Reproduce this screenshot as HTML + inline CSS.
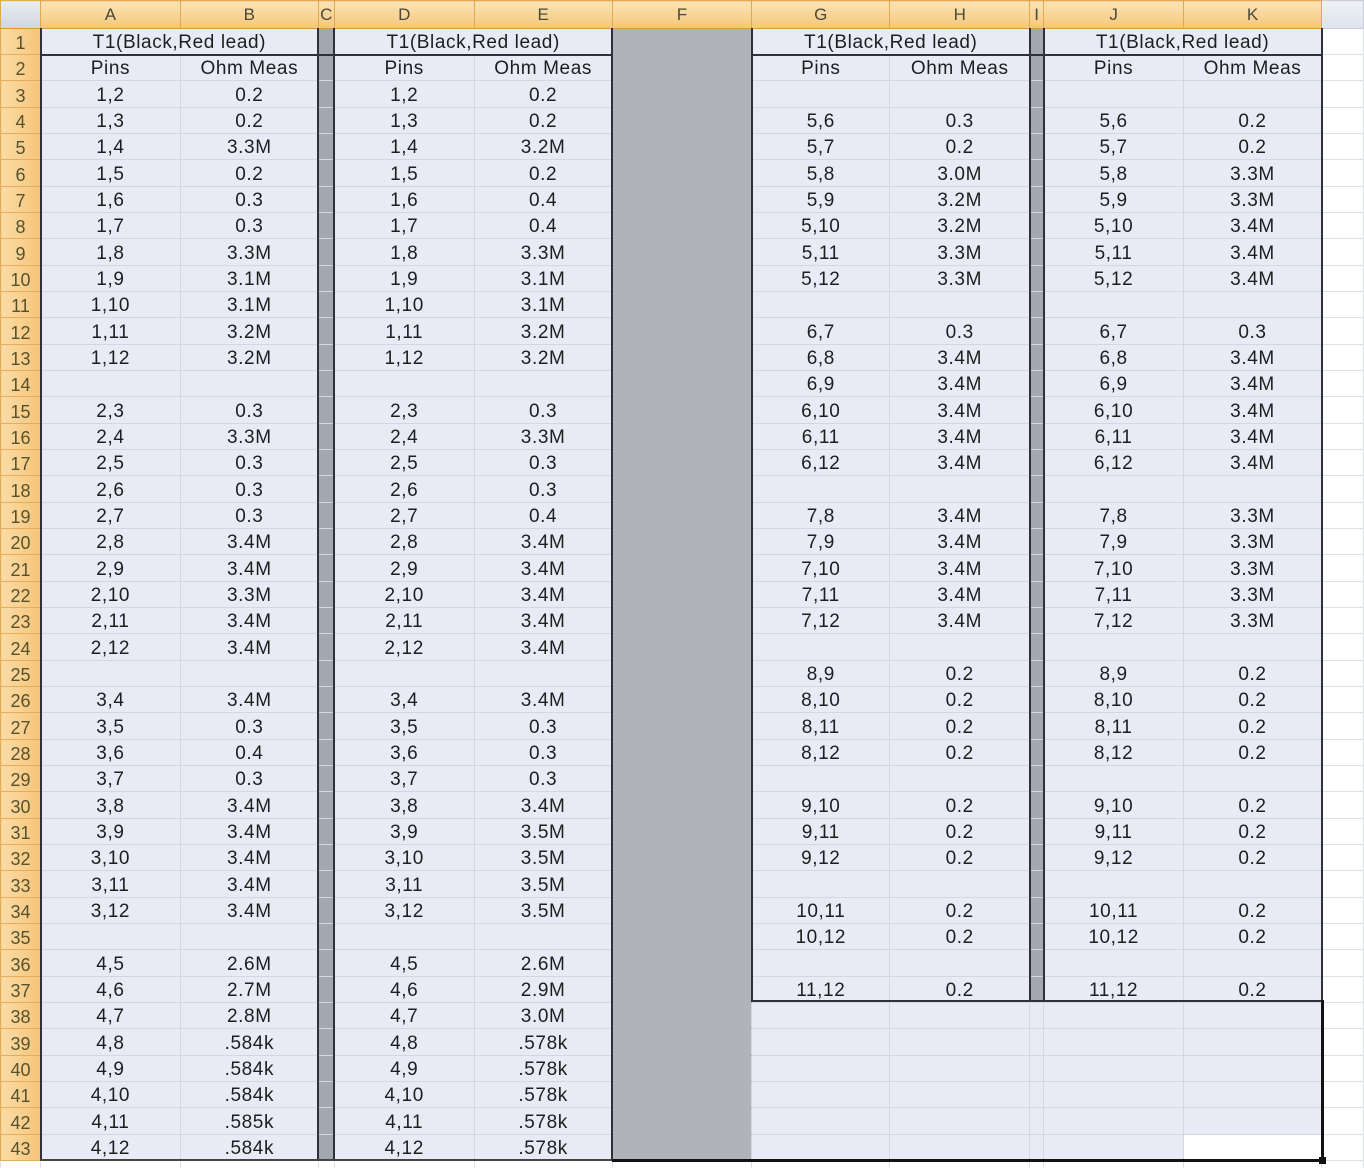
<!DOCTYPE html>
<html><head><meta charset="utf-8">
<style>
html,body{margin:0;padding:0;background:#fff;width:1364px;height:1168px;overflow:hidden;position:relative}
table{border-collapse:collapse;table-layout:fixed;position:absolute;left:0;top:0;font-family:"Liberation Sans",sans-serif}
td{border:1px solid #d3d7e1;padding:3px 0 0 0;text-align:center;font-size:19px;letter-spacing:0.6px;color:#1e1e1e;white-space:nowrap;overflow:hidden;background:#e8ebf5;line-height:20px}
tr.h td{background:linear-gradient(#fbe3b6,#f5c67a);color:#4a4a3a;font-size:17px;height:27px;padding:0;border-color:#e0a850;border-bottom:1px solid #d99a3a;letter-spacing:0}
tr.h td.corner{background:linear-gradient(#e9edf3,#cfd6e0)}
td.r{background:linear-gradient(90deg,#fbdca6,#f6c479);color:#57522e;font-size:18px;letter-spacing:0;border-color:#e2ad5c}
td.c{background:#a3a7af}
td.f{background:#b0b3ba;border-top-color:#b0b3ba;border-bottom-color:#b0b3ba}
td.l{background:#fff;border-color:#dde0e6}
td.w{background:#fff}
.ln{position:absolute;background:#2e3238}
</style></head><body>
<table>
<colgroup><col style="width:40px"><col style="width:140px"><col style="width:138px"><col style="width:16px"><col style="width:140px"><col style="width:138px"><col style="width:140px"><col style="width:138px"><col style="width:140px"><col style="width:14px"><col style="width:140px"><col style="width:138px"><col style="width:42px"></colgroup>
<tr class="h"><td class="corner"></td><td>A</td><td>B</td><td>C</td><td>D</td><td>E</td><td>F</td><td>G</td><td>H</td><td>I</td><td>J</td><td>K</td><td style="background:linear-gradient(#eef1f6,#dde3ec);border-color:#c9ced8"></td></tr>
<tr style="height:26px"><td class="r">1</td><td colspan="2">T1(Black,Red lead)</td><td class="c"></td><td colspan="2">T1(Black,Red lead)</td><td class="f"></td><td colspan="2">T1(Black,Red lead)</td><td class="c"></td><td colspan="2">T1(Black,Red lead)</td><td class="l"></td></tr>
<tr style="height:26px"><td class="r">2</td><td>Pins</td><td>Ohm Meas</td><td class="c"></td><td>Pins</td><td>Ohm Meas</td><td class="f"></td><td>Pins</td><td>Ohm Meas</td><td class="c"></td><td>Pins</td><td>Ohm Meas</td><td class="l"></td></tr>
<tr style="height:27px"><td class="r">3</td><td>1,2</td><td>0.2</td><td class="c"></td><td>1,2</td><td>0.2</td><td class="f"></td><td></td><td></td><td class="c"></td><td></td><td></td><td class="l"></td></tr>
<tr style="height:26px"><td class="r">4</td><td>1,3</td><td>0.2</td><td class="c"></td><td>1,3</td><td>0.2</td><td class="f"></td><td>5,6</td><td>0.3</td><td class="c"></td><td>5,6</td><td>0.2</td><td class="l"></td></tr>
<tr style="height:26px"><td class="r">5</td><td>1,4</td><td>3.3M</td><td class="c"></td><td>1,4</td><td>3.2M</td><td class="f"></td><td>5,7</td><td>0.2</td><td class="c"></td><td>5,7</td><td>0.2</td><td class="l"></td></tr>
<tr style="height:27px"><td class="r">6</td><td>1,5</td><td>0.2</td><td class="c"></td><td>1,5</td><td>0.2</td><td class="f"></td><td>5,8</td><td>3.0M</td><td class="c"></td><td>5,8</td><td>3.3M</td><td class="l"></td></tr>
<tr style="height:26px"><td class="r">7</td><td>1,6</td><td>0.3</td><td class="c"></td><td>1,6</td><td>0.4</td><td class="f"></td><td>5,9</td><td>3.2M</td><td class="c"></td><td>5,9</td><td>3.3M</td><td class="l"></td></tr>
<tr style="height:26px"><td class="r">8</td><td>1,7</td><td>0.3</td><td class="c"></td><td>1,7</td><td>0.4</td><td class="f"></td><td>5,10</td><td>3.2M</td><td class="c"></td><td>5,10</td><td>3.4M</td><td class="l"></td></tr>
<tr style="height:27px"><td class="r">9</td><td>1,8</td><td>3.3M</td><td class="c"></td><td>1,8</td><td>3.3M</td><td class="f"></td><td>5,11</td><td>3.3M</td><td class="c"></td><td>5,11</td><td>3.4M</td><td class="l"></td></tr>
<tr style="height:26px"><td class="r">10</td><td>1,9</td><td>3.1M</td><td class="c"></td><td>1,9</td><td>3.1M</td><td class="f"></td><td>5,12</td><td>3.3M</td><td class="c"></td><td>5,12</td><td>3.4M</td><td class="l"></td></tr>
<tr style="height:26px"><td class="r">11</td><td>1,10</td><td>3.1M</td><td class="c"></td><td>1,10</td><td>3.1M</td><td class="f"></td><td></td><td></td><td class="c"></td><td></td><td></td><td class="l"></td></tr>
<tr style="height:27px"><td class="r">12</td><td>1,11</td><td>3.2M</td><td class="c"></td><td>1,11</td><td>3.2M</td><td class="f"></td><td>6,7</td><td>0.3</td><td class="c"></td><td>6,7</td><td>0.3</td><td class="l"></td></tr>
<tr style="height:26px"><td class="r">13</td><td>1,12</td><td>3.2M</td><td class="c"></td><td>1,12</td><td>3.2M</td><td class="f"></td><td>6,8</td><td>3.4M</td><td class="c"></td><td>6,8</td><td>3.4M</td><td class="l"></td></tr>
<tr style="height:26px"><td class="r">14</td><td></td><td></td><td class="c"></td><td></td><td></td><td class="f"></td><td>6,9</td><td>3.4M</td><td class="c"></td><td>6,9</td><td>3.4M</td><td class="l"></td></tr>
<tr style="height:27px"><td class="r">15</td><td>2,3</td><td>0.3</td><td class="c"></td><td>2,3</td><td>0.3</td><td class="f"></td><td>6,10</td><td>3.4M</td><td class="c"></td><td>6,10</td><td>3.4M</td><td class="l"></td></tr>
<tr style="height:26px"><td class="r">16</td><td>2,4</td><td>3.3M</td><td class="c"></td><td>2,4</td><td>3.3M</td><td class="f"></td><td>6,11</td><td>3.4M</td><td class="c"></td><td>6,11</td><td>3.4M</td><td class="l"></td></tr>
<tr style="height:26px"><td class="r">17</td><td>2,5</td><td>0.3</td><td class="c"></td><td>2,5</td><td>0.3</td><td class="f"></td><td>6,12</td><td>3.4M</td><td class="c"></td><td>6,12</td><td>3.4M</td><td class="l"></td></tr>
<tr style="height:27px"><td class="r">18</td><td>2,6</td><td>0.3</td><td class="c"></td><td>2,6</td><td>0.3</td><td class="f"></td><td></td><td></td><td class="c"></td><td></td><td></td><td class="l"></td></tr>
<tr style="height:26px"><td class="r">19</td><td>2,7</td><td>0.3</td><td class="c"></td><td>2,7</td><td>0.4</td><td class="f"></td><td>7,8</td><td>3.4M</td><td class="c"></td><td>7,8</td><td>3.3M</td><td class="l"></td></tr>
<tr style="height:26px"><td class="r">20</td><td>2,8</td><td>3.4M</td><td class="c"></td><td>2,8</td><td>3.4M</td><td class="f"></td><td>7,9</td><td>3.4M</td><td class="c"></td><td>7,9</td><td>3.3M</td><td class="l"></td></tr>
<tr style="height:27px"><td class="r">21</td><td>2,9</td><td>3.4M</td><td class="c"></td><td>2,9</td><td>3.4M</td><td class="f"></td><td>7,10</td><td>3.4M</td><td class="c"></td><td>7,10</td><td>3.3M</td><td class="l"></td></tr>
<tr style="height:26px"><td class="r">22</td><td>2,10</td><td>3.3M</td><td class="c"></td><td>2,10</td><td>3.4M</td><td class="f"></td><td>7,11</td><td>3.4M</td><td class="c"></td><td>7,11</td><td>3.3M</td><td class="l"></td></tr>
<tr style="height:26px"><td class="r">23</td><td>2,11</td><td>3.4M</td><td class="c"></td><td>2,11</td><td>3.4M</td><td class="f"></td><td>7,12</td><td>3.4M</td><td class="c"></td><td>7,12</td><td>3.3M</td><td class="l"></td></tr>
<tr style="height:27px"><td class="r">24</td><td>2,12</td><td>3.4M</td><td class="c"></td><td>2,12</td><td>3.4M</td><td class="f"></td><td></td><td></td><td class="c"></td><td></td><td></td><td class="l"></td></tr>
<tr style="height:26px"><td class="r">25</td><td></td><td></td><td class="c"></td><td></td><td></td><td class="f"></td><td>8,9</td><td>0.2</td><td class="c"></td><td>8,9</td><td>0.2</td><td class="l"></td></tr>
<tr style="height:26px"><td class="r">26</td><td>3,4</td><td>3.4M</td><td class="c"></td><td>3,4</td><td>3.4M</td><td class="f"></td><td>8,10</td><td>0.2</td><td class="c"></td><td>8,10</td><td>0.2</td><td class="l"></td></tr>
<tr style="height:27px"><td class="r">27</td><td>3,5</td><td>0.3</td><td class="c"></td><td>3,5</td><td>0.3</td><td class="f"></td><td>8,11</td><td>0.2</td><td class="c"></td><td>8,11</td><td>0.2</td><td class="l"></td></tr>
<tr style="height:26px"><td class="r">28</td><td>3,6</td><td>0.4</td><td class="c"></td><td>3,6</td><td>0.3</td><td class="f"></td><td>8,12</td><td>0.2</td><td class="c"></td><td>8,12</td><td>0.2</td><td class="l"></td></tr>
<tr style="height:26px"><td class="r">29</td><td>3,7</td><td>0.3</td><td class="c"></td><td>3,7</td><td>0.3</td><td class="f"></td><td></td><td></td><td class="c"></td><td></td><td></td><td class="l"></td></tr>
<tr style="height:27px"><td class="r">30</td><td>3,8</td><td>3.4M</td><td class="c"></td><td>3,8</td><td>3.4M</td><td class="f"></td><td>9,10</td><td>0.2</td><td class="c"></td><td>9,10</td><td>0.2</td><td class="l"></td></tr>
<tr style="height:26px"><td class="r">31</td><td>3,9</td><td>3.4M</td><td class="c"></td><td>3,9</td><td>3.5M</td><td class="f"></td><td>9,11</td><td>0.2</td><td class="c"></td><td>9,11</td><td>0.2</td><td class="l"></td></tr>
<tr style="height:26px"><td class="r">32</td><td>3,10</td><td>3.4M</td><td class="c"></td><td>3,10</td><td>3.5M</td><td class="f"></td><td>9,12</td><td>0.2</td><td class="c"></td><td>9,12</td><td>0.2</td><td class="l"></td></tr>
<tr style="height:27px"><td class="r">33</td><td>3,11</td><td>3.4M</td><td class="c"></td><td>3,11</td><td>3.5M</td><td class="f"></td><td></td><td></td><td class="c"></td><td></td><td></td><td class="l"></td></tr>
<tr style="height:26px"><td class="r">34</td><td>3,12</td><td>3.4M</td><td class="c"></td><td>3,12</td><td>3.5M</td><td class="f"></td><td>10,11</td><td>0.2</td><td class="c"></td><td>10,11</td><td>0.2</td><td class="l"></td></tr>
<tr style="height:26px"><td class="r">35</td><td></td><td></td><td class="c"></td><td></td><td></td><td class="f"></td><td>10,12</td><td>0.2</td><td class="c"></td><td>10,12</td><td>0.2</td><td class="l"></td></tr>
<tr style="height:27px"><td class="r">36</td><td>4,5</td><td>2.6M</td><td class="c"></td><td>4,5</td><td>2.6M</td><td class="f"></td><td></td><td></td><td class="c"></td><td></td><td></td><td class="l"></td></tr>
<tr style="height:26px"><td class="r">37</td><td>4,6</td><td>2.7M</td><td class="c"></td><td>4,6</td><td>2.9M</td><td class="f"></td><td>11,12</td><td>0.2</td><td class="c"></td><td>11,12</td><td>0.2</td><td class="l"></td></tr>
<tr style="height:26px"><td class="r">38</td><td>4,7</td><td>2.8M</td><td class="c"></td><td>4,7</td><td>3.0M</td><td class="f"></td><td></td><td></td><td></td><td></td><td></td><td class="l"></td></tr>
<tr style="height:27px"><td class="r">39</td><td>4,8</td><td>.584k</td><td class="c"></td><td>4,8</td><td>.578k</td><td class="f"></td><td></td><td></td><td></td><td></td><td></td><td class="l"></td></tr>
<tr style="height:26px"><td class="r">40</td><td>4,9</td><td>.584k</td><td class="c"></td><td>4,9</td><td>.578k</td><td class="f"></td><td></td><td></td><td></td><td></td><td></td><td class="l"></td></tr>
<tr style="height:26px"><td class="r">41</td><td>4,10</td><td>.584k</td><td class="c"></td><td>4,10</td><td>.578k</td><td class="f"></td><td></td><td></td><td></td><td></td><td></td><td class="l"></td></tr>
<tr style="height:27px"><td class="r">42</td><td>4,11</td><td>.585k</td><td class="c"></td><td>4,11</td><td>.578k</td><td class="f"></td><td></td><td></td><td></td><td></td><td></td><td class="l"></td></tr>
<tr style="height:26px"><td class="r">43</td><td>4,12</td><td>.584k</td><td class="c"></td><td>4,12</td><td>.578k</td><td class="f"></td><td></td><td></td><td></td><td></td><td class="w"></td><td class="l"></td></tr>
<tr style="height:20px"><td class="l"></td><td class="l"></td><td class="l"></td><td class="l"></td><td class="l"></td><td class="l"></td><td class="l"></td><td class="l"></td><td class="l"></td><td class="l"></td><td class="l"></td><td class="l"></td><td class="l"></td></tr>
</table>
<div class="ln" style="left:40px;top:28px;width:2px;height:1133px"></div>
<div class="ln" style="left:317px;top:28px;width:2px;height:1133px"></div>
<div class="ln" style="left:333px;top:28px;width:2px;height:1133px"></div>
<div class="ln" style="left:611px;top:28px;width:2px;height:1133px"></div>
<div class="ln" style="left:751px;top:28px;width:2px;height:974px"></div>
<div class="ln" style="left:1029px;top:28px;width:2px;height:974px"></div>
<div class="ln" style="left:1043px;top:28px;width:2px;height:974px"></div>
<div class="ln" style="left:1321px;top:28px;width:2px;height:974px"></div>
<div class="ln" style="left:40px;top:54px;width:572px;height:2px"></div>
<div class="ln" style="left:752px;top:54px;width:571px;height:2px"></div>
<div class="ln" style="left:752px;top:1000px;width:571px;height:2px"></div>
<div class="ln" style="left:40px;top:1159px;width:572px;height:2px;background:#444"></div>
<div class="ln" style="left:612px;top:1159px;width:712px;height:3px;background:#111"></div>
<div class="ln" style="left:1321px;top:1000px;width:3px;height:162px;background:#111"></div>
<div class="ln" style="left:1319px;top:1157px;width:7px;height:7px;background:#111"></div>
</body></html>
